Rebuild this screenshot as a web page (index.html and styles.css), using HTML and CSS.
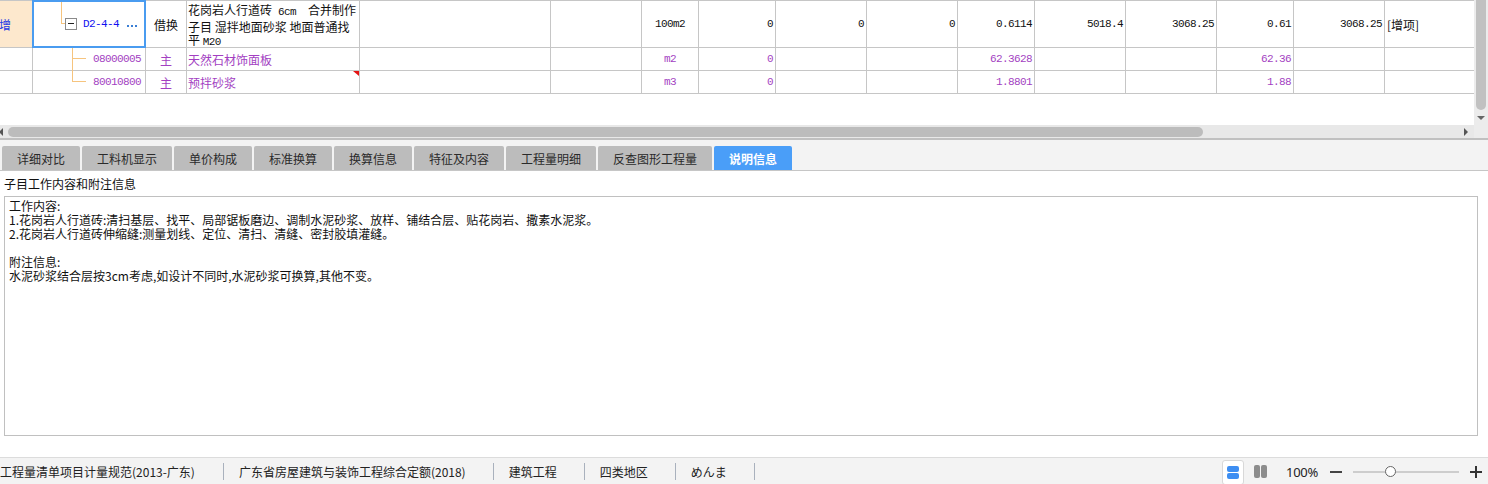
FILE: index.html
```html
<!DOCTYPE html>
<html lang="zh-CN">
<head>
<meta charset="utf-8">
<title>说明信息</title>
<link rel="stylesheet" href="styles.css">
</head>
<body>
<div class="top">
  <div class="grid-wrap">
    <div class="grid">
      <div class="c add">增</div>
      <div class="c tree sel"><span class="vl vl1"></span><span class="hl hl1"></span><span class="tg"></span><span class="code">D2-4-4</span><span class="more"><i></i><i></i><i></i></span></div>
      <div class="c ctr">借换</div>
      <div class="c desc">花岗岩人行道砖<span class="lat">&nbsp;6cm&nbsp;&nbsp;</span>合并制作<br>子目 湿拌地面砂浆 地面普通找<br>平 <span class="lat">M20</span></div>
      <div class="c"></div>
      <div class="c"></div>
      <div class="c ctr mono">100m2</div>
      <div class="c n">0</div>
      <div class="c n">0</div>
      <div class="c n">0</div>
      <div class="c n">0.6114</div>
      <div class="c n">5018.4</div>
      <div class="c n">3068.25</div>
      <div class="c n">0.61</div>
      <div class="c n">3068.25</div>
      <div class="c last tag">[增项]</div>

      <div class="c"></div>
      <div class="c tree sub p"><span class="vl vl2"></span><span class="hl hl2"></span><span class="mono">08000005</span></div>
      <div class="c ctr p">主</div>
      <div class="c name p">天然石材饰面板</div>
      <div class="c"></div>
      <div class="c"></div>
      <div class="c ctr mono p">m2</div>
      <div class="c n p">0</div>
      <div class="c"></div>
      <div class="c"></div>
      <div class="c n p">62.3628</div>
      <div class="c"></div>
      <div class="c"></div>
      <div class="c n p">62.36</div>
      <div class="c"></div>
      <div class="c last"></div>

      <div class="c"></div>
      <div class="c tree sub p"><span class="vl vl3"></span><span class="hl hl2"></span><span class="mono">80010800</span></div>
      <div class="c ctr p">主</div>
      <div class="c name p flag">预拌砂浆</div>
      <div class="c"></div>
      <div class="c"></div>
      <div class="c ctr mono p">m3</div>
      <div class="c n p">0</div>
      <div class="c"></div>
      <div class="c"></div>
      <div class="c n p">1.8801</div>
      <div class="c"></div>
      <div class="c"></div>
      <div class="c n p">1.88</div>
      <div class="c"></div>
      <div class="c last"></div>
    </div>
    <div class="vscroll"><div class="vthumb"></div><span class="vdown"></span></div>
  </div>
  <div class="hscroll">
    <span class="harr-l"></span>
    <div class="htrack"><div class="hthumb"></div></div>
    <span class="harr-r"></span>
    <div class="corner"></div>
  </div>
</div>

<div class="panel">
  <div class="tabs">
    <div class="tab w78">详细对比</div>
    <div class="tab w90">工料机显示</div>
    <div class="tab w78">单价构成</div>
    <div class="tab w78">标准换算</div>
    <div class="tab w78">换算信息</div>
    <div class="tab w90">特征及内容</div>
    <div class="tab w90">工程量明细</div>
    <div class="tab w114">反查图形工程量</div>
    <div class="tab w78 active">说明信息</div>
  </div>
</div>

<div class="detail">
  <div class="dlabel">子目工作内容和附注信息</div>
  <div class="dbox">
    <div class="ln">工作内容:</div>
    <div class="ln">1.花岗岩人行道砖:清扫基层、找平、局部锯板磨边、调制水泥砂浆、放样、铺结合层、贴花岗岩、撒素水泥浆。</div>
    <div class="ln">2.花岗岩人行道砖伸缩缝:测量划线、定位、清扫、清缝、密封胶填灌缝。</div>
    <div class="ln"></div>
    <div class="ln">附注信息:</div>
    <div class="ln">水泥砂浆结合层按3cm考虑,如设计不同时,水泥砂浆可换算,其他不变。</div>
  </div>
</div>

<div class="status">
  <div class="st-items">
    <span class="si first">工程量清单项目计量规范(2013-广东)</span>
    <span class="sep"></span>
    <span class="si">广东省房屋建筑与装饰工程综合定额(2018)</span>
    <span class="sep"></span>
    <span class="si">建筑工程</span>
    <span class="sep"></span>
    <span class="si">四类地区</span>
    <span class="sep"></span>
    <span class="si">めんま</span>
    <span class="sep"></span>
  </div>
  <div class="st-right">
    <div class="vb1"><i></i><i></i></div>
    <div class="vb2"><i></i><i></i></div>
    <span class="zoomtxt">100%</span>
    <span class="minus"></span>
    <div class="slider"><span class="knob"></span></div>
    <span class="plus"></span>
  </div>
</div>
</body>
</html>
```

FILE: styles.css
```css
* { box-sizing: border-box; margin: 0; padding: 0; }
html, body { width: 1488px; height: 484px; overflow: hidden; background: #fff; }
body {
  font-family: "Noto Sans CJK SC", "Noto Sans", sans-serif;
  font-size: 12px;
  color: #111;
  display: flex;
  flex-direction: column;
}

/* ---------- top grid ---------- */
.top { height: 140px; flex: none; display: flex; flex-direction: column; }
.grid-wrap { height: 125px; display: flex; }
.grid {
  width: 1474px;
  display: grid;
  grid-template-columns: 33px 113px 41px 173px 191px 91px 57px 77px 91px 91px 77px 91px 91px 77px 91px 89px;
  grid-template-rows: 47px 23px 23px;
  align-content: start;
  border-top: 1px solid #c6c6c6;
}
.c {
  position: relative;
  display: flex;
  align-items: center;
  border-right: 1px solid #c6c6c6;
  border-bottom: 1px solid #c6c6c6;
  white-space: nowrap;
}
.c.last { border-right: none; }
.ctr { justify-content: center; }
.p { color: #a33fc2; }
.mono, .n, .lat {
  font-family: "Liberation Mono", monospace;
  font-size: 11px;
  letter-spacing: -0.6px;
}
.n { justify-content: flex-end; padding-right: 2px; }
.add { background: #fde8cd; color: #1e3ce6; text-indent: -1px; }
.tag { padding-left: 2px; }
.name { padding-left: 1px; }
.c.desc {
  display: block;
  padding: 2px 0 0 1px;
  line-height: 13.5px;
  overflow: hidden;
}
.flag::after {
  content: "";
  position: absolute;
  top: 0;
  right: 0;
  border-top: 5px solid #e41414;
  border-left: 6px solid transparent;
}

/* tree cell */
.tree { padding-left: 32px; }
.tree.sub { justify-content: flex-end; padding-right: 4px; }
.vl, .hl { position: absolute; background: #f6c47e; }
.vl { width: 1px; }
.hl { height: 1px; }
.vl1 { left: 28px; top: -1px; height: 24px; }
.hl1 { left: 28px; top: 22px; width: 4px; }
.vl2 { left: 39px; top: 0; bottom: -1px; }
.vl3 { left: 39px; top: 0; height: 11px; }
.hl2 { left: 39px; top: 10px; width: 14px; }
.tg {
  position: relative;
  width: 12px;
  height: 12px;
  border: 1px solid #8a8a8a;
  background: #fff;
  margin-right: 6px;
  flex: none;
}
.tg::after {
  content: "";
  position: absolute;
  left: 2px;
  top: 4px;
  width: 6px;
  height: 1px;
  background: #222;
}
.code {
  color: #1010f0;
  font-family: "Liberation Mono", monospace;
  font-size: 11px;
  letter-spacing: -0.6px;
}
.more { display: flex; gap: 2px; margin-left: 8px; margin-top: 3px; }
.more i { width: 2px; height: 2px; background: #3a7fd5; }
.sel::after {
  content: "";
  position: absolute;
  top: -1px;
  left: -1px;
  right: -1px;
  bottom: -1px;
  border: 2px solid #4a9cf0;
  pointer-events: none;
}

/* scrollbars */
.vscroll {
  width: 14px;
  background: #ececec;
  display: flex;
  flex-direction: column;
  align-items: center;
}
.vthumb { width: 10px; height: 110px; background: #c1c1c1; border-radius: 0 0 5px 5px; }
.vdown {
  margin-top: 6px;
  border-left: 4px solid transparent;
  border-right: 4px solid transparent;
  border-top: 4px solid #666;
}
.hscroll {
  height: 15px;
  background: #e8e8e8;
  border-bottom: 2px solid #c0c0c0;
  display: flex;
  align-items: center;
}
.harr-l {
  border-right: 4px solid #555;
  border-top: 4px solid transparent;
  border-bottom: 4px solid transparent;
  margin-left: -1px;
  margin-right: 5px;
}
.htrack { flex: 1; display: flex; align-items: center; }
.hthumb { width: 1195px; height: 10px; background: #bcbcbc; border-radius: 5px; }
.harr-r {
  border-left: 4px solid #555;
  border-top: 4px solid transparent;
  border-bottom: 4px solid transparent;
  margin-right: 6px;
}
.corner { width: 14px; height: 13px; background: #ececec; }

/* ---------- tabs panel ---------- */
.panel {
  flex: none;
  height: 31px;
  padding-top: 6px;
  background: #f3f3f3;
  border-bottom: 1px solid #c6c6c6;
}
.tabs { display: flex; gap: 2px; padding-left: 2px; height: 24px; }
.tab {
  height: 24px;
  background: #bcbcbc;
  color: #2a2a2a;
  display: flex;
  align-items: center;
  justify-content: center;
  border-radius: 2px 2px 0 0;
}
.w78 { width: 78px; }
.w90 { width: 90px; }
.w114 { width: 114px; }
.tab.active { background: #4a9ef8; color: #fff; font-weight: bold; }

/* ---------- detail ---------- */
.detail { flex: 1; background: #fff; }
.dlabel { margin-top: 5px; line-height: 16px; padding-left: 4px; color: #111; }
.dbox {
  margin: 4px 0 0 4px;
  width: 1474px;
  height: 240px;
  border: 1px solid #c0c0c0;
  padding: 2px 4px;
  color: #111;
}
.ln { height: 14px; line-height: 14px; white-space: nowrap; }

/* ---------- status bar ---------- */
.status {
  flex: none;
  height: 27px;
  background: #f3f3f3;
  border-top: 1px solid #dcdcdc;
  display: flex;
  justify-content: space-between;
  align-items: center;
  padding-top: 1px;
}
.st-items { display: flex; align-items: center; }
.si { padding: 0 27px 0 15px; color: #222; }
.si.first { padding-left: 0; padding-right: 28px; }
.sep { width: 1px; height: 17px; background: #a9b1bd; }
.st-right { display: flex; align-items: center; padding-right: 6px; }
.vb1 {
  width: 22px;
  height: 25px;
  background: #fff;
  border: 1px solid #d8d8d8;
  border-radius: 3px;
  display: flex;
  flex-direction: column;
  align-items: center;
  justify-content: center;
  gap: 1px;
  margin-top: 2px;
}
.vb1 i { width: 12px; height: 6px; background: #3d8ef2; border-radius: 2px; }
.vb2 { display: flex; gap: 1px; margin-left: 10px; }
.vb2 i { width: 6px; height: 13px; background: #8c8c8c; border-radius: 2px; }
.zoomtxt { margin-left: 19px; font-family: "Noto Sans", sans-serif; font-size: 13px; color: #222; letter-spacing: -0.3px; }
.minus { margin-left: 12px; width: 12px; height: 2px; background: #444; }
.slider { position: relative; margin-left: 11px; width: 106px; height: 2px; background: #cdcdcd; }
.knob {
  position: absolute;
  left: 32px;
  top: -5px;
  width: 11px;
  height: 11px;
  border-radius: 50%;
  background: #fff;
  border: 1.5px solid #666;
}
.plus { position: relative; margin-left: 11px; width: 12px; height: 12px; }
.plus::before, .plus::after { content: ""; position: absolute; background: #333; }
.plus::before { left: 0; top: 5px; width: 12px; height: 2px; }
.plus::after { left: 5px; top: 0; width: 2px; height: 12px; }
```
